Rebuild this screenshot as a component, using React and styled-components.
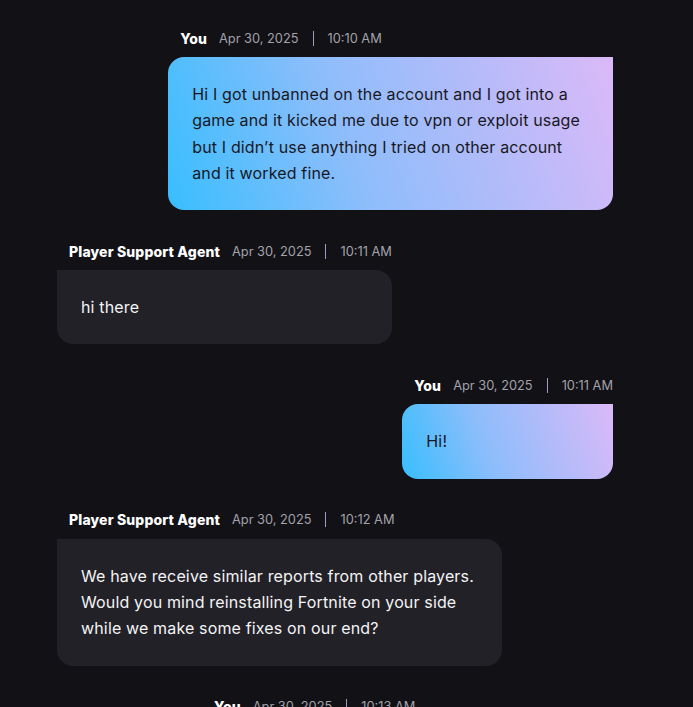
import React from "react";
import styled, { createGlobalStyle } from "styled-components";

const GlobalStyle = createGlobalStyle`
  html, body {
    margin: 0;
    padding: 0;
    background: #121116;
  }
  body {
    font-family: Inter, "Noto Sans", sans-serif;
    height: 707px;
    overflow: hidden;
  }
`;

const Thread = styled.div`
  display: flex;
  flex-direction: column;
  gap: 31px;
  width: 556px;
  padding: 28px 0 0 57px;
`;

const Message = styled.div`
  display: flex;
  flex-direction: column;
  align-self: ${(p) => (p.$mine ? "flex-end" : "flex-start")};
  max-width: 80%;
  gap: 9px;
`;

const Meta = styled.div`
  display: flex;
  align-items: center;
  height: 20px;
  padding-left: 12px;
  white-space: nowrap;
`;

const Author = styled.span`
  font-size: 14px;
  font-weight: 800;
  letter-spacing: 0.15px;
  color: #ffffff;
  margin-right: 12px;
`;

const Stamp = styled.span`
  font-size: 12.8px;
  color: #a3a2aa;
`;

const Divider = styled.span`
  width: 1px;
  height: 15px;
  background: #a996c8;
  margin: 0 14px;
`;

const Bubble = styled.div`
  padding: 24px;
  font-size: 16px;
  line-height: 26.3px;
  letter-spacing: 0.15px;
  border-radius: ${(p) => (p.$mine ? "16px 0 16px 16px" : "0 16px 16px 16px")};
  color: ${(p) => (p.$mine ? "#181824" : "#f4f4f6")};
  background: ${(p) =>
    p.$mine
      ? "linear-gradient(70deg, #38befe 0%, #8dbdfb 40%, #dbb9f8 100%)"
      : "#222127"};
`;

const messages = [
  {
    mine: true,
    author: "You",
    time: "10:10 AM",
    text: "Hi I got unbanned on the account and I got into a game and it kicked me due to vpn or exploit usage but I didn\u2019t use anything I tried on other account and it worked fine.",
  },
  { mine: false, author: "Player Support Agent", time: "10:11 AM", text: "hi there" },
  { mine: true, author: "You", time: "10:11 AM", text: "Hi!" },
  {
    mine: false,
    author: "Player Support Agent",
    time: "10:12 AM",
    text: "We have receive similar reports from other players. Would you mind reinstalling Fortnite on your side while we make some fixes on our end?",
  },
  { mine: true, author: "You", time: "10:13 AM", text: "Okay, I will reinstall the game and let you know." },
];

export default function App() {
  return (
    <>
      <GlobalStyle />
      <Thread>
        {messages.map((m, i) => (
          <Message key={"msg_" + i} $mine={m.mine}>
            <Meta>
              <Author>{m.author}</Author>
              <Stamp>Apr 30, 2025</Stamp>
              <Divider />
              <Stamp>{m.time}</Stamp>
            </Meta>
            <Bubble $mine={m.mine}>{m.text}</Bubble>
          </Message>
        ))}
      </Thread>
    </>
  );
}
